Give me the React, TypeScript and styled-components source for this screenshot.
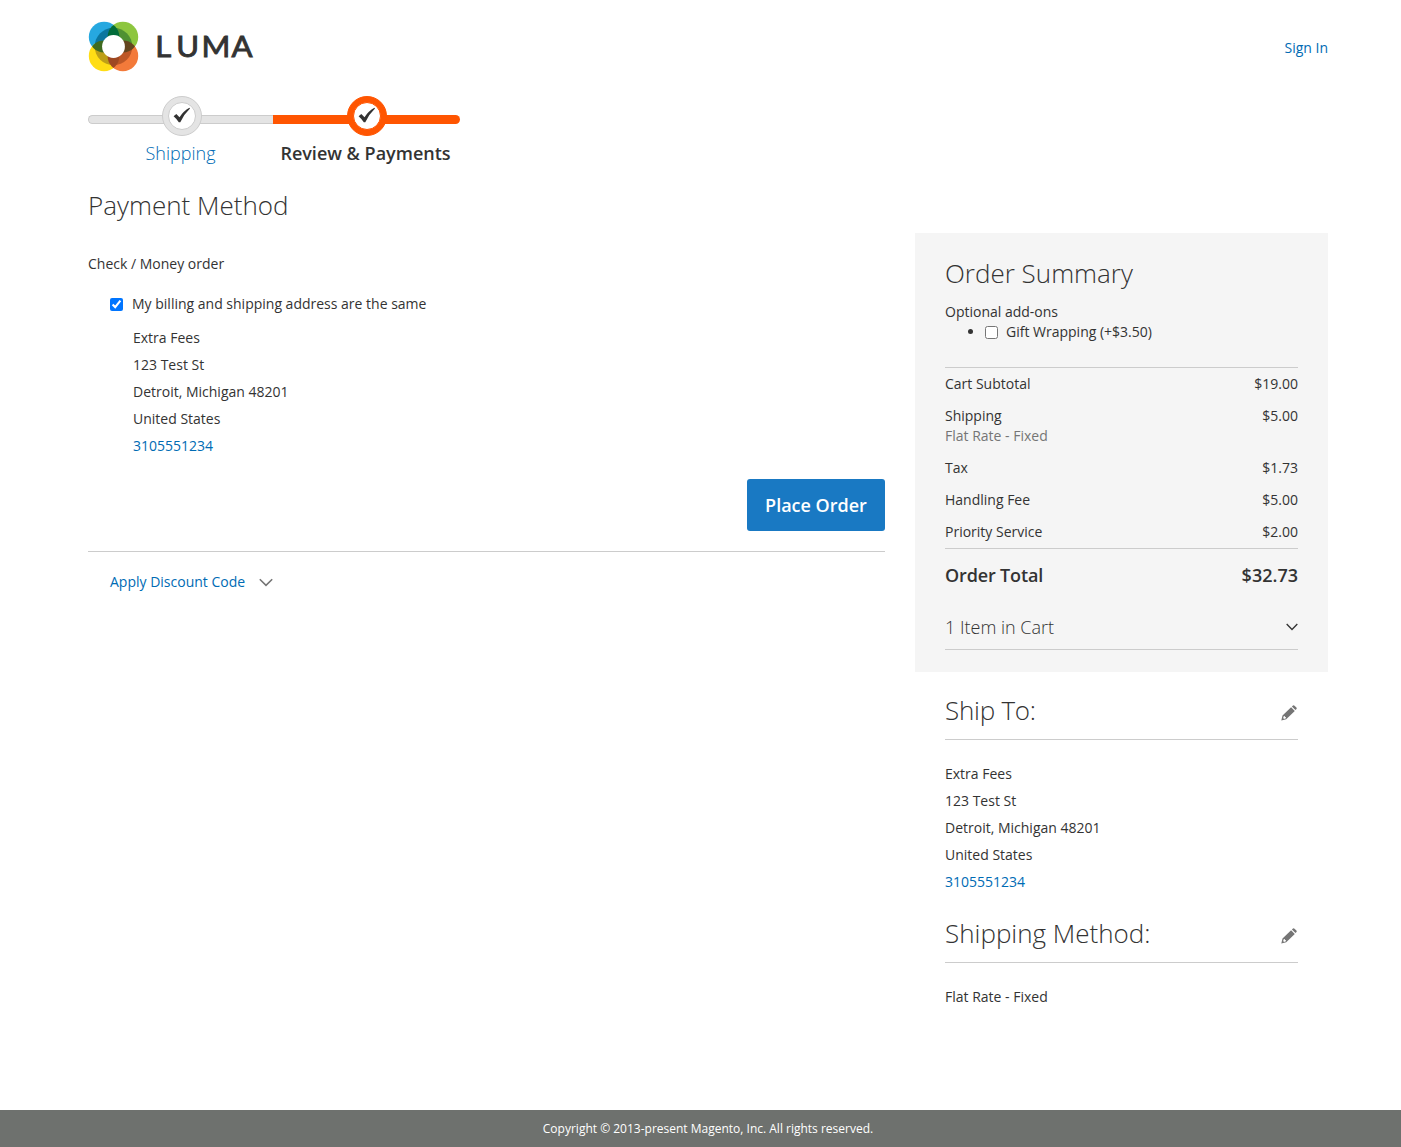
import React, { useState } from "react";
import styled, { createGlobalStyle, css } from "styled-components";

const GlobalStyle = createGlobalStyle`
  *, *::before, *::after { box-sizing: border-box; }
  body {
    margin: 0;
    background: #fff;
    color: #333;
    font: 400 14px/20px "Open Sans", "Noto Sans", sans-serif;
  }
  h1, h2, p, ul, dl, dd { margin: 0; padding: 0; font-weight: inherit; }
  a { color: #006bb4; text-decoration: none; }
`;

const Page = styled.div`
  display: flex;
  flex-direction: column;
  min-height: 1147px;
  overflow: hidden;
`;

const Container = styled.div`
  width: 1240px;
  margin-left: 88px;
  flex: 1;
`;

const Header = styled.header`
  display: flex;
  justify-content: space-between;
  align-items: flex-start;
  height: 96px;
  padding-top: 21px;
`;

const SignIn = styled.a`
  margin-top: 17px;
`;

const Steps = styled.ul`
  display: flex;
  list-style: none;
  height: 91px;
`;

const Step = styled.li<{ $active?: boolean }>`
  display: flex;
  flex-direction: column;
  align-items: center;
  width: ${(p) => (p.$active ? 187 : 185)}px;
  font-size: 18px;
  line-height: 26px;
  font-weight: ${(p) => (p.$active ? 600 : 300)};
  color: ${(p) => (p.$active ? "#333" : "#006bb4")};
`;

const Track = styled.div<{ $active?: boolean }>`
  display: flex;
  align-items: center;
  justify-content: center;
  width: 100%;
  height: 9px;
  margin-top: 19px;
  background: ${(p) => (p.$active ? "#ff5501" : "#e4e4e4")};
  ${(p) =>
    p.$active
      ? css`border-radius: 0 6px 6px 0;`
      : css`
          border: 1px solid #ccc;
          border-right: 0;
          border-radius: 6px 0 0 6px;
        `}
`;

const Badge = styled.svg`
  flex: none;
  width: 40px;
  height: 40px;
  margin: -7px 0 0 1px;
`;

const StepLabel = styled.span<{ $active?: boolean }>`
  margin-top: 16px;
  margin-right: ${(p) => (p.$active ? 2 : 0)}px;
  white-space: nowrap;
`;

const Columns = styled.div`
  display: grid;
  grid-template-columns: 797px 413px;
  column-gap: 30px;
`;

const Main = styled.main``;

const Title = styled.h1<{ $tight?: boolean }>`
  font-size: 26px;
  line-height: 36px;
  font-weight: 300;
  letter-spacing: ${(p) => (p.$tight ? "-0.25px" : "normal")};
`;

const MethodName = styled.p`
  margin-top: 31px;
`;

const CheckRow = styled.label<{ $gap: number }>`
  display: flex;
  align-items: center;
  gap: ${(p) => p.$gap}px;
`;

const Checkbox = styled.input`
  width: 13px;
  height: 13px;
  margin: 1px 0 0;
`;

const Billing = styled.div`
  padding: 20px 0 10px 22px;
`;

const Address = styled.address<{ $indent?: number }>`
  font-style: normal;
  line-height: 27px;
  margin-left: ${(p) => p.$indent ?? 0}px;
`;

const AddressLine = styled.div``;

const Actions = styled.div`
  display: flex;
  justify-content: flex-end;
  margin-top: 20px;
  padding-bottom: 20px;
  border-bottom: 1px solid #ccc;
`;

const PlaceOrder = styled.button`
  width: 138px;
  height: 52px;
  padding: 0;
  border: 0;
  border-radius: 3px;
  background: #1979c3;
  color: #fff;
  font: 600 18px/26px "Open Sans", sans-serif;
`;

const Discount = styled.a`
  display: flex;
  align-items: center;
  gap: 14px;
  padding: 20px 0 0 22px;
`;

const Aside = styled.aside`
  margin-top: 46px;
`;

const Summary = styled.section`
  height: 439px;
  padding: 22px 30px 0;
  background: #f5f5f5;
`;

const AddOns = styled.div`
  padding-top: 11px;
  height: 76px;
`;

const AddOnList = styled.ul`
  list-style: none;
`;

const AddOn = styled.li`
  display: flex;
  align-items: center;
  padding-left: 23px;
  gap: 12px;

  &::before {
    content: "";
    width: 5px;
    height: 5px;
    margin-top: -1px;
    border-radius: 50%;
    background: #333;
  }
`;

const Totals = styled.dl`
  border-top: 1px solid #ccc;
`;

const TotalRow = styled.div`
  display: flex;
  justify-content: space-between;
  padding: 6px 0;
`;

const Note = styled.span`
  display: block;
  color: #757575;
`;

const GrandTotal = styled(TotalRow)`
  border-top: 1px solid #ccc;
  padding: 13px 0 0;
  font-size: 18px;
  line-height: 26px;
  font-weight: 600;

  dt { letter-spacing: -0.15px; }
`;

const CartToggle = styled.div`
  display: flex;
  justify-content: space-between;
  align-items: center;
  height: 38px;
  margin-top: 24px;
  padding-bottom: 7px;
  border-bottom: 1px solid #ccc;
  font-size: 18px;
  font-weight: 300;
`;

const Info = styled.section`
  padding: 20px 30px 0;
`;

const InfoHead = styled.div`
  display: flex;
  justify-content: space-between;
  align-items: flex-start;
  height: 48px;
  margin-bottom: 20px;
  border-bottom: 1px solid #ccc;
`;

const Footer = styled.footer`
  height: 37px;
  padding-left: 15px;
  background: #6e716e;
  color: #fff;
  font-size: 12px;
  line-height: 37px;
  text-align: center;
`;

const Pencil = styled.svg`
  width: 16px;
  height: 16px;
  margin: 13px 1px 0 0;
`;

function Logo() {
  const petals = [
    { cx: 16.1, cy: 16.1, fill: "#26a8e0" },
    { cx: 34.9, cy: 16.1, fill: "#8dc63f" },
    { cx: 16.1, cy: 34.9, fill: "#ffdd15" },
    { cx: 34.9, cy: 34.9, fill: "#f37a3a" },
  ];
  return (
    <svg width="170" height="52" viewBox="0 0 170 52" role="img">
      <defs>
        <clipPath id="core"><circle cx="25.5" cy="25.5" r="18.8" /></clipPath>
        {petals.map((p, i) => (
          <clipPath id={`petal${i}`} key={i}><circle cx={p.cx} cy={p.cy} r="15.3" /></clipPath>
        ))}
      </defs>
      {petals.map((p, i) => <circle key={i} cx={p.cx} cy={p.cy} r="15.3" fill={p.fill} />)}
      <g clipPath="url(#core)">
        <rect x="6" y="6" width="19.5" height="19.5" fill="#0b769f" />
        <rect x="25.5" y="6" width="19.5" height="19.5" fill="#4f9132" />
        <rect x="6" y="25.5" width="19.5" height="19.5" fill="#bd9f18" />
        <rect x="25.5" y="25.5" width="19.5" height="19.5" fill="#bd5726" />
      </g>
      <g clipPath="url(#petal0)">
        <circle cx="34.9" cy="16.1" r="15.3" fill="#006b39" />
        <circle cx="16.1" cy="34.9" r="15.3" fill="#3f6b20" />
      </g>
      <g clipPath="url(#petal3)">
        <circle cx="34.9" cy="16.1" r="15.3" fill="#64461f" />
        <circle cx="16.1" cy="34.9" r="15.3" fill="#9e4822" />
      </g>
      <circle cx="25.5" cy="25.5" r="11.4" fill="#fff" />
      <text
        transform="scale(1.06 1)"
        y="35.8"
        x="63.4 83.2 107.2 135.4"
        fontFamily="Lato, sans-serif"
        fontSize="29.3"
        fontWeight="400"
        fill="#333"
        stroke="#333"
        strokeWidth="0.9"
      >
        LUMA
      </text>
    </svg>
  );
}

function StepBadge({ active }: { active?: boolean }) {
  return (
    <Badge viewBox="0 0 40 40">
      <circle cx="20" cy="20" r="19.5" fill={active ? "#ff5501" : "#e4e4e4"} stroke={active ? "#ff5501" : "#ccc"} />
      <circle cx="20" cy="20" r="13.5" fill="#fff" stroke={active ? "#ff5501" : "#ccc"} />
      <path d="M11.6 20.2 14.3 18 17.5 21.3 Q21.5 15 27.4 11.8 L28 12.6 Q22 18.3 18.3 26.2 L16.8 26.2 Q14.5 22.7 11.6 20.2Z" fill="#333" />
    </Badge>
  );
}

function Chevron({ width, color }: { width: number; color: string }) {
  return (
    <svg width={width} height={width === 14 ? 9 : 8} viewBox="0 0 14 9" preserveAspectRatio="none">
      <path d="M.8 1.2 7 7.3 13.2 1.2" fill="none" stroke={color} strokeWidth="1.6" />
    </svg>
  );
}

function EditIcon() {
  return (
    <Pencil viewBox="0 0 16 16">
      <path
        fillRule="evenodd"
        fill="#757575"
        d="M.3 15.6 1.5 10.6 10.1 2.3 13.8 5.9 5.2 14.2ZM2.7 11.2 2.2 13.1 3 13.9 4.9 13.3 5 12.2 4 11.9 3.8 11Z M10.9 1.6 12 .6Q12.7.1 13.5.7L15.4 2.5Q16.1 3.3 15.5 4.1L14.5 5.1Z"
      />
    </Pencil>
  );
}

function AddressBlock({ indent }: { indent?: number }) {
  return (
    <Address $indent={indent}>
      {["Extra Fees", "123 Test St", "Detroit, Michigan 48201", "United States"].map((line) => (
        <AddressLine key={line}>{line}</AddressLine>
      ))}
      <a href="#phone">3105551234</a>
    </Address>
  );
}

const totals = [
  { label: "Cart Subtotal", amount: "$19.00" },
  { label: "Shipping", note: "Flat Rate - Fixed", amount: "$5.00" },
  { label: "Tax", amount: "$1.73" },
  { label: "Handling Fee", amount: "$5.00" },
  { label: "Priority Service", amount: "$2.00" },
];

export default function App() {
  const [same, setSame] = useState(true);
  const [gift, setGift] = useState(false);
  return (
    <Page>
      <GlobalStyle />
      <Container>
        <Header>
          <Logo />
          <SignIn href="#signin">Sign In</SignIn>
        </Header>
        <Steps>
          <Step>
            <Track><StepBadge /></Track>
            <StepLabel>Shipping</StepLabel>
          </Step>
          <Step $active>
            <Track $active><StepBadge active /></Track>
            <StepLabel $active>Review &amp; Payments</StepLabel>
          </Step>
        </Steps>
        <Columns>
          <Main>
            <Title>Payment Method</Title>
            <MethodName>Check / Money order</MethodName>
            <Billing>
              <CheckRow $gap={9}>
                <Checkbox type="checkbox" checked={same} onChange={() => setSame(!same)} />
                My billing and shipping address are the same
              </CheckRow>
            </Billing>
            <AddressBlock indent={45} />
            <Actions><PlaceOrder>Place Order</PlaceOrder></Actions>
            <Discount href="#discount">
              Apply Discount Code
              <Chevron width={14} color="#757575" />
            </Discount>
          </Main>
          <Aside>
            <Summary>
              <Title as="h2">Order Summary</Title>
              <AddOns>
                <p>Optional add-ons</p>
                <AddOnList>
                  <AddOn>
                    <CheckRow $gap={8}>
                      <Checkbox type="checkbox" checked={gift} onChange={() => setGift(!gift)} />
                      Gift Wrapping (+$3.50)
                    </CheckRow>
                  </AddOn>
                </AddOnList>
              </AddOns>
              <Totals>
                {totals.map((t) => (
                  <TotalRow key={t.label}>
                    <dt>{t.label}{t.note && <Note>{t.note}</Note>}</dt>
                    <dd>{t.amount}</dd>
                  </TotalRow>
                ))}
                <GrandTotal><dt>Order Total</dt><dd>$32.73</dd></GrandTotal>
              </Totals>
              <CartToggle>
                <span>1 Item in Cart</span>
                <Chevron width={12} color="#333" />
              </CartToggle>
            </Summary>
            <Info>
              <InfoHead><Title as="h2" $tight>Ship To:</Title><EditIcon /></InfoHead>
              <AddressBlock />
            </Info>
            <Info>
              <InfoHead><Title as="h2">Shipping Method:</Title><EditIcon /></InfoHead>
              <Address>Flat Rate - Fixed</Address>
            </Info>
          </Aside>
        </Columns>
      </Container>
      <Footer>Copyright © 2013-present Magento, Inc. All rights reserved.</Footer>
    </Page>
  );
}
